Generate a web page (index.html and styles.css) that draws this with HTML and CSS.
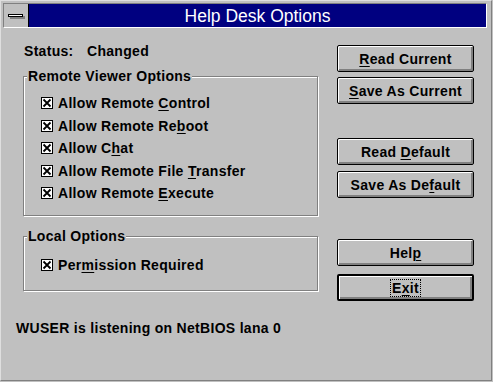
FILE: index.html
```html
<!DOCTYPE html>
<html lang="en">
<head>
    <meta charset="UTF-8">
    <title>Help Desk Options</title>
    <link rel="stylesheet" href="styles.css">
</head>
<body>
    <div class="window">
        <div class="titlebar">
            <div class="sysmenu"><span class="sysmenu-bar"></span></div>
            <div class="caption">Help Desk Options</div>
        </div>

        <div class="client">
            <div class="left">
                <div class="status">
                    <span class="status-label">Status:</span>
                    <span>Changed</span>
                </div>

                <fieldset class="group group-remote">
                    <legend>Remote Viewer Options</legend>
                    <label class="check"><span class="box"><svg viewBox="0 0 10 10"><path d="M1.5 1.5L8.5 8.5M8.5 1.5L1.5 8.5"/></svg></span><span>Allow Remote <u>C</u>ontrol</span></label>
                    <label class="check"><span class="box"><svg viewBox="0 0 10 10"><path d="M1.5 1.5L8.5 8.5M8.5 1.5L1.5 8.5"/></svg></span><span>Allow Remote Re<u>b</u>oot</span></label>
                    <label class="check"><span class="box"><svg viewBox="0 0 10 10"><path d="M1.5 1.5L8.5 8.5M8.5 1.5L1.5 8.5"/></svg></span><span>Allow C<u>h</u>at</span></label>
                    <label class="check"><span class="box"><svg viewBox="0 0 10 10"><path d="M1.5 1.5L8.5 8.5M8.5 1.5L1.5 8.5"/></svg></span><span>Allow Remote File <u>T</u>ransfer</span></label>
                    <label class="check"><span class="box"><svg viewBox="0 0 10 10"><path d="M1.5 1.5L8.5 8.5M8.5 1.5L1.5 8.5"/></svg></span><span>Allow Remote <u>E</u>xecute</span></label>
                </fieldset>

                <fieldset class="group group-local">
                    <legend>Local Options</legend>
                    <label class="check"><span class="box"><svg viewBox="0 0 10 10"><path d="M1.5 1.5L8.5 8.5M8.5 1.5L1.5 8.5"/></svg></span><span>Per<u>m</u>ission Required</span></label>
                </fieldset>

                <p class="message">WUSER is listening on NetBIOS lana 0</p>
            </div>

            <div class="buttons">
                <button class="btn btn-read-current"><u>R</u>ead Current</button>
                <button class="btn btn-save-current"><u>S</u>ave As Current</button>
                <button class="btn btn-read-default">Read <u>D</u>efault</button>
                <button class="btn btn-save-default">Save As De<u>f</u>ault</button>
                <button class="btn btn-help">Hel<u>p</u></button>
                <button class="btn btn-exit default"><span class="focus">E<u>x</u>it</span></button>
            </div>
        </div>
    </div>
</body>
</html>
```

FILE: styles.css
```css
body {
    margin: 0;
    background-color: #c0c0c0;
    overflow: hidden;
}
.window {
    width: 492px;
    height: 381px;
    box-sizing: border-box;
    border: 1px solid;
    border-color: #dfdfdf #808080 #808080 #dfdfdf;
    padding: 2px 4px 0 2px;
    background-color: #c0c0c0;
    font-family: "Liberation Sans", Arial, sans-serif;
    font-size: 14px;
    font-weight: bold;
    line-height: 16px;
    letter-spacing: 0.3px;
    color: #000;
}

/* caption */
.titlebar {
    display: flex;
    height: 23px;
    border-top: 1px solid #808080;
    border-left: 1px solid #808080;
    border-right: 1px solid #fff;
    border-bottom: 1px solid #fff;
}
.sysmenu {
    width: 24px;
    border-right: 1px solid #000;
    display: flex;
    align-items: center;
    justify-content: center;
    background-color: #c0c0c0;
}
.sysmenu-bar {
    display: block;
    width: 13px;
    height: 1px;
    margin: 0 2px 0 0;
    background-color: #fff;
    border: 1px solid #000;
    box-shadow: 2px 2px 0 #808080;
}
.caption {
    flex: 1;
    background-color: #000080;
    color: #fff;
    text-align: center;
    font-size: 17.5px;
    font-weight: normal;
    letter-spacing: 0;
    line-height: 22px;
    padding-top: 1px;
}

/* client area */
.client {
    display: flex;
    justify-content: space-between;
    padding: 0 13px 0 13px;
}
.left {
    width: 303px;
}
.status {
    display: flex;
    margin-top: 15px;
    padding-left: 8px;
}
.status-label {
    width: 63px;
}

.group {
    margin: 0 0 0 7px;
    width: 295px;
    box-sizing: border-box;
    border: 1px solid #808080;
    box-shadow: 1px 1px 0 #fff, inset 1px 1px 0 #fff;
    min-inline-size: 0;
}
.group legend {
    margin-left: 3px;
    padding: 0 1px;
    background-color: #c0c0c0;
}
.group-remote {
    margin-top: 9px;
    padding: 8px 0 10.5px 0;
}
.group-local {
    margin-top: 12px;
    padding: 10px 0 13px 0;
}

.check {
    display: flex;
    align-items: center;
    height: 22.5px;
    padding-left: 17px;
}
.box {
    width: 12px;
    height: 12px;
    box-sizing: border-box;
    border: 1px solid #000;
    background-color: #fff;
    margin-right: 5px;
    flex: none;
}
.box svg {
    display: block;
    width: 10px;
    height: 10px;
}
.box path {
    stroke: #000;
    stroke-width: 1.8;
    fill: none;
}

u {
    text-decoration-thickness: 1px;
    text-underline-offset: 2px;
}

.message {
    margin: 29px 0 0 0;
}

/* push buttons */
.buttons {
    width: 137px;
    display: flex;
    flex-direction: column;
}
.btn {
    height: 27px;
    padding: 0;
    background-color: #c0c0c0;
    border: 1px solid #000;
    border-radius: 2px;
    box-shadow: inset 1px 1px 0 #fff, inset -2px -2px 0 #808080;
    font: inherit;
    letter-spacing: inherit;
    color: #000;
}
.btn.default {
    border-width: 2px;
}
.btn-read-current { margin-top: 17px; }
.btn-save-current { margin-top: 5px; }
.btn-read-default { margin-top: 34px; }
.btn-save-default { margin-top: 6px; }
.btn-help { margin-top: 41px; }
.btn-exit { margin-top: 8px; }

.focus {
    display: inline-block;
    border: 1px dotted #000;
    padding: 0 1px;
}
```
